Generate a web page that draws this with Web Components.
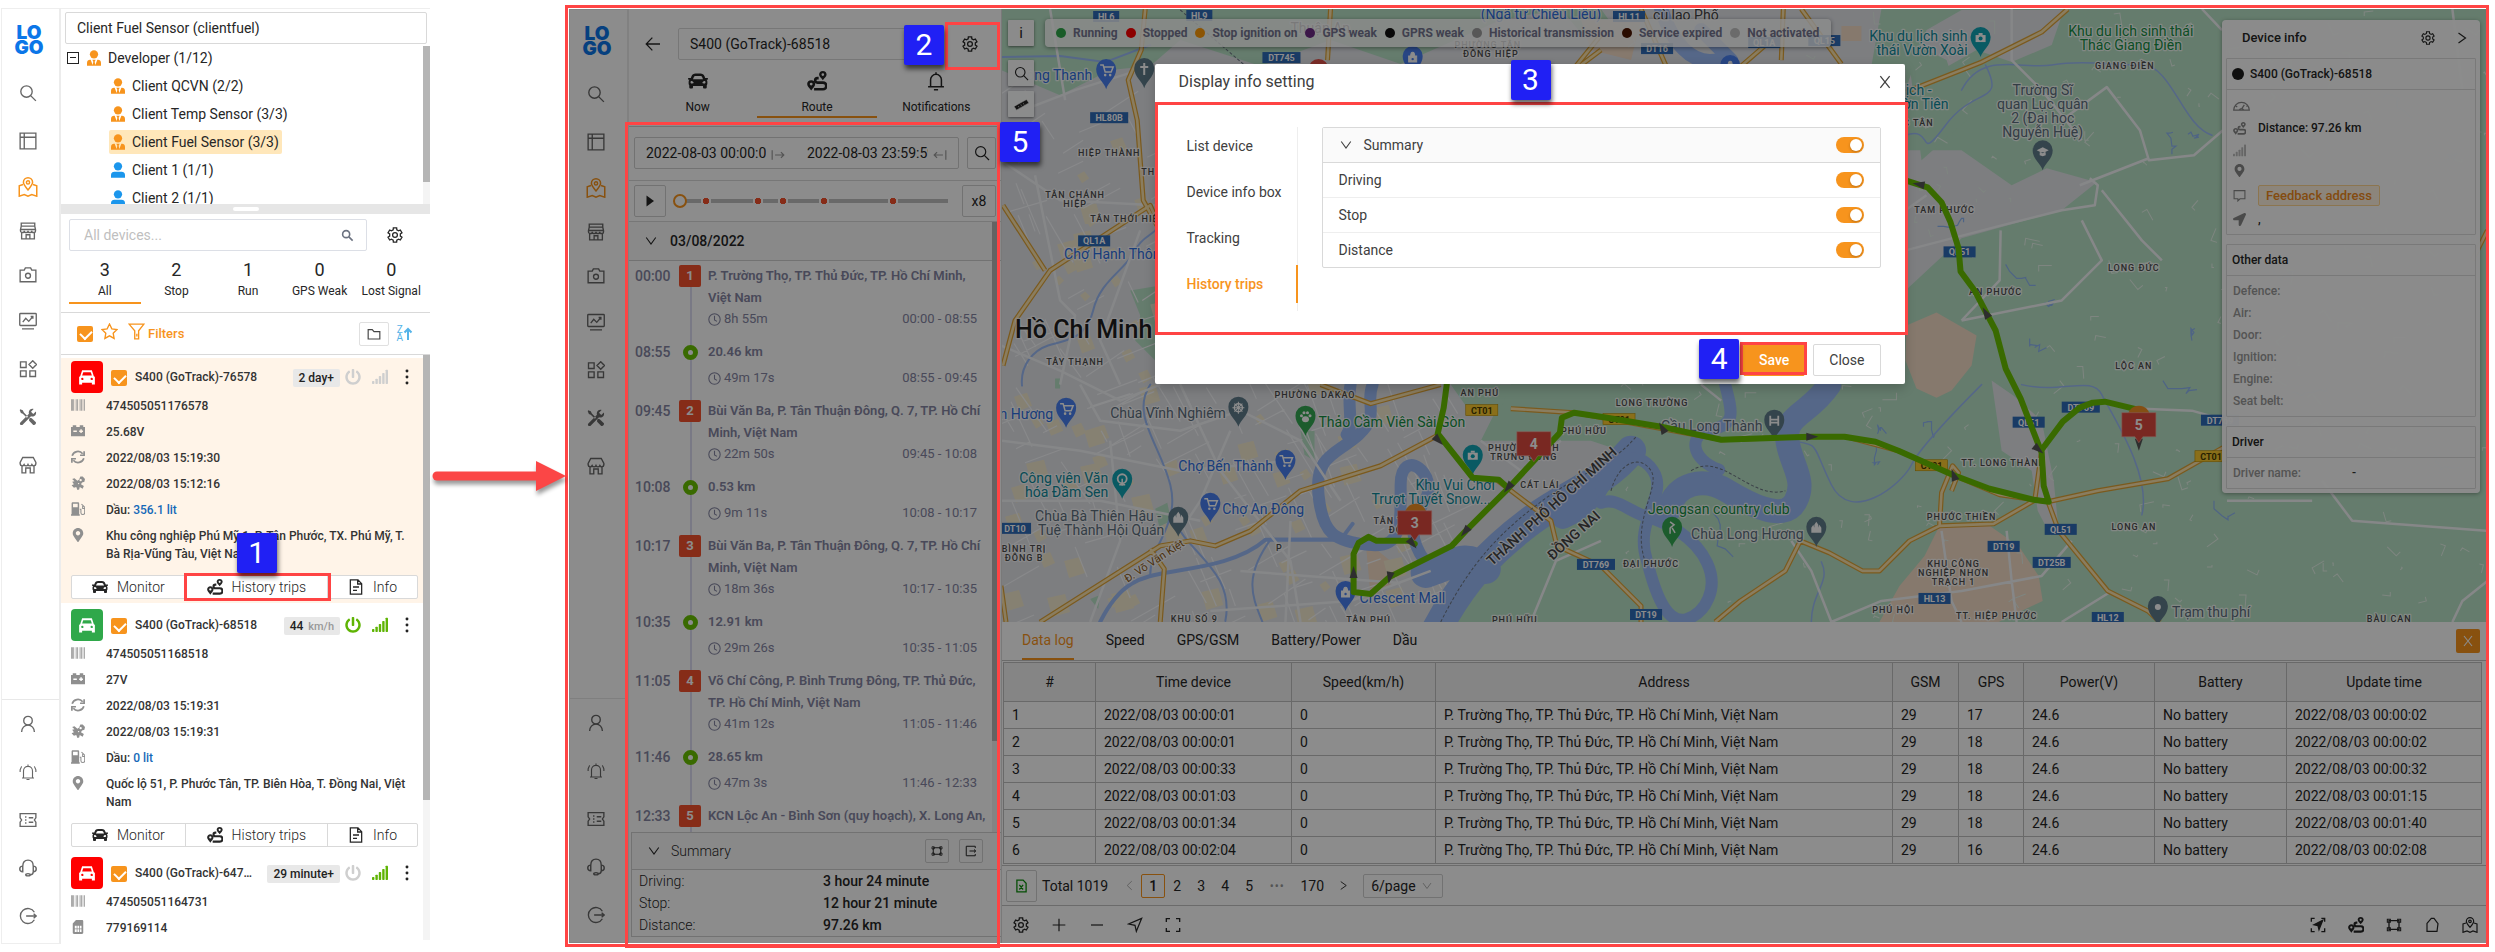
<!DOCTYPE html>
<html lang="en">
<head>
<meta charset="utf-8">
<title>Display info setting – History trips</title>
<style>
  html,body{margin:0;background:#fff}
  body{font-family:Roboto,"Liberation Sans",sans-serif;font-size:14px;line-height:20px;color:#262626}
</style>
</head>
<body>
<guide-page></guide-page>
<script>
const define = (name, css, html, ready) => {
  customElements.define(name, class extends HTMLElement {
    connectedCallback() {
      if (this.shadowRoot) return;
      const root = this.attachShadow({mode: 'open'});
      const t = document.createElement('template');
      t.innerHTML = `<style>*{box-sizing:border-box}
        button,input,select{font:inherit;color:inherit;margin:0}
        button{padding:0;border:0;background:none;cursor:pointer}
        ul,ol,dl,dd,h2,h3,p{margin:0;padding:0;list-style:none;font:inherit}
        a{color:inherit;text-decoration:none}
        ${css}</style>` + (typeof html === 'function' ? html(this) : html);
      root.append(t.content.cloneNode(true));
      if (ready) ready(root, this);
    }
  });
};

/* ---------- icons ---------- */
const gear = (() => {
  let p = '';
  for (let i = 0; i < 6; i++) {
    const a = i * 60 - 90;
    [[-19, 8.2], [-13, 11], [13, 11], [19, 8.2]].forEach(([d, r], k) => {
      const t = (a + d) * Math.PI / 180;
      p += (i + k ? 'L' : 'M') + (12 + r * Math.cos(t)).toFixed(1) + ' ' + (12 + r * Math.sin(t)).toFixed(1);
    });
  }
  return `<path d="${p}Z"/><circle cx="12" cy="12" r="3.6"/>`;
})();
const fill = (vb, d) => ({vb, f: 1, d: `<path d="${d}"/>`});
const ICONS = {
  gear: {sw: 1.9, d: gear},
  search: {sw: 1.8, d: '<circle cx="10" cy="10" r="7.6"/><path d="M15.5 15.5 22.5 22.5"/>'},
  find: {sw: 3, d: '<circle cx="9.5" cy="9.5" r="6.5"/><path d="M14.5 14.5 21.5 21.5"/>'},
  layout: {sw: 1.8, d: '<path d="M1.5 1.5h21v21h-21zM7 1.5v21M1.5 7H22.5"/>'},
  map: {sw: 1.8, d: '<path d="M12 15.500C8.500 11.500 6.500 9 6.500 6.400a5.500 5.500 0 0 1 11 0C17.500 9 15.500 11.500 12 15.500z"/><circle cx="12" cy="6.500" r="1.900"/><path d="M6 9 1.500 10.500V23l6-2 4.500 2 4.500-2 6 2V10.500L18 9"/>'},
  store: {sw: 1.8, d: '<path d="M3 1.500h18v4H3zM3 5.500 2 10h20l-1-4.500M2 10v1.500a2.500 2.500 0 0 0 5 0 2.500 2.500 0 0 0 5 0 2.500 2.500 0 0 0 5 0 2.500 2.500 0 0 0 5 0V10M3.500 14v8.500h17V14M9.500 22.500V17h5v5.500"/>'},
  camera: {sw: 1.8, d: '<path d="M1.500 5.500h5.500l1.500-3h7l1.500 3h5.500v15.500h-21z"/><circle cx="12" cy="13" r="3.300"/>'},
  monitor: {sw: 1.8, d: '<rect x="1" y="2" width="22" height="16" rx="1"/><path d="M5 13.500 9 8.500l4 4 5.500-6.500M15.500 6h3v3M4 22.500h16"/>'},
  apps: {sw: 1.8, d: '<path d="M2 2.500h7.500V10H2zM2 14.500h7.500V22H2zM14.500 14.500H22V22h-7.500zM18.300 1l5 5-5 5-5-5z"/>'},
  tools: {f: 1, d: '<path d="M1.500 1.500 5 3l1.500 3 5.500 5.500-1.500 1.500L5 7.500 2.500 6.500 1 3zM22.500 4.500l-3.500 3.500-3-3 3.500-3.700c-3-1-6.500 1-6.500 4.700 0 .8.100 1.300.300 1.800L1.500 19.500c-1 1.500.500 4 3 3L16 11c3.500 1.300 8-1.500 6.500-6.500z"/><path d="M14.500 13 17 13.500l5.500 5.500c1 1.500-1.500 4.500-3.500 3.500L13.500 17v-2.500z"/>'},
  shop: {sw: 1.8, d: '<path d="M5 2h14l3.500 6.500v2a2.800 2.800 0 0 1-5.300 1 2.800 2.800 0 0 1-5.200 0 2.800 2.800 0 0 1-5.200 0 2.800 2.800 0 0 1-5.300-1v-2zM4 13v9.500h5V16h6v6.500h5V13"/>'},
  user: {d: '<circle cx="12" cy="7.500" r="5.700"/><path d="M3.500 22.500c0-5 3.500-9 8.500-9s8.500 4 8.500 9"/>', sw: 1.8},
  alarm: {sw: 1.5, d: '<path d="M6 20V10.500a6 6 0 0 1 12 0V20M4 20h16M10 22h4M12 4.500V2M3.500 4.500 1.500 9v3M20.500 4.500l2 4.500v3"/>'},
  bell: {sw: 1.800, d: '<path d="M5.500 19V10.500a6.500 6.500 0 0 1 13 0V19M2.500 19h19M12 4V1.500M9.500 22.500h5"/>'},
  ticket: {sw: 1.8, d: '<path d="M1.500 3.500h21V9L20.500 12l2 3v5.500h-21V15l2-3-2-3zM9 7v2M9 11v2M9 15v2M13 9h6M13 15h6"/>'},
  headset: {sw: 1.900, d: '<path d="M5 9.500C5 4 8 1.500 12 1.500S19 4 19 9.500M5 9.500v7.500c-2.500 0-4-1.500-4-3.700s1.500-3.800 4-3.800zM19 9.500v7.500c2.500 0 4-1.500 4-3.700s-1.500-3.800-4-3.800zM19 17c0 3-2 4-4 4"/><ellipse cx="12" cy="21" rx="3" ry="1.500"/>'},
  logout: {sw: 1.8, d: '<path d="M20.500 7A10 10 0 1 0 20.500 17M9.500 12H23M19.500 9l3.500 3-3.500 3"/>'},
  star: {d: '<path d="m12 1.500 3.300 6.800 7.200 1-5.300 5.100 1.300 7.400L12 18.200l-6.500 3.600 1.300-7.400L1.500 9.300l7.200-1z"/>', sw: 1.9},
  funnel: {d: '<path d="M1.500 1.500h21L15 11v11.500H9.500V11zM12.500 15v4"/>', sw: 1.9},
  folder: {sw: 2, d: '<path d="M2 4.500h7l3 3.500h10v12.500H2z"/>'},
  caret: {sw: 2.2, d: '<path d="M2.500 5l9.500 13 9.500-13"/>'},
  right: {sw: 2, d: '<path d="M6 3.500l12 8.500-12 8.500"/>'},
  left: {sw: 2, d: '<path d="M17 2.500 7 12l10 9.500"/>'},
  close: {sw: 2.2, d: '<path d="M4 2 20 22M20 2 4 22"/>'},
  back: {sw: 1.900, d: '<path d="M22.500 12H2M11 2.500 1.800 12 11 21.500"/>'},
  car: fill('0 32 512 448', 'M499.990 176h-59.870l-16.640-41.600C406.380 91.630 365.570 64 319.500 64h-127c-46.060 0-86.880 27.630-103.990 70.400L71.870 176H12.010C4.200 176-1.530 183.340.370 190.910l6 24C7.700 220.250 12.500 224 18.010 224h20.070C24.650 235.730 16 252.780 16 272v48c0 16.120 6.160 30.670 16 41.930V416c0 17.670 14.330 32 32 32h32c17.670 0 32-14.330 32-32v-32h256v32c0 17.670 14.330 32 32 32h32c17.670 0 32-14.330 32-32v-54.070c9.840-11.250 16-25.800 16-41.930v-48c0-19.220-8.650-36.270-22.070-48H494c5.510 0 10.310-3.750 11.640-9.090l6-24c1.890-7.570-3.840-14.910-11.650-14.910zm-352.060-17.830c7.290-18.220 24.940-30.170 44.570-30.170h127c19.630 0 37.280 11.950 44.570 30.170L384 208H128l19.930-49.830zM96 319.800c-19.200 0-32-12.760-32-31.900S76.800 256 96 256s48 28.710 48 47.850-28.800 15.950-48 15.950zm320 0c-19.200 0-48 3.190-48-15.950S396.800 256 416 256s32 12.760 32 31.900-12.800 31.900-32 31.900z'),
  carbox: {f: 1, d: '<path fill-rule="evenodd" d="M5.500 3h13l2.500 7.500 1.500 1.500v10h-4v-2.500h-13V22h-4V12L3 10.500zM7 5.500 5.500 10h13L17 5.500zM5.700 13a1.500 1.500 0 1 0 .1 3.100 1.500 1.500 0 0 0-.1-3.100zm12.500 0a1.500 1.500 0 1 0 .1 3.100 1.500 1.500 0 0 0-.1-3.100z"/>'},
  power: fill('0 0 512 512', 'M400 54.100c63 45 104 118.600 104 201.900 0 136.800-110.800 247.700-247.500 248C120 504.300 8.200 393 8 256.400 7.900 173.100 48.900 99.300 111.800 54.200c11.700-8.300 28-4.800 35 7.700L162.600 90c5.900 10.500 3.100 23.800-6.600 31-41.500 30.800-68 79.600-68 134.900-.1 92.300 74.500 168.100 168 168.100 91.600 0 168.600-74.200 168-169.100-.3-51.800-24.700-101.800-68.100-134-9.700-7.200-12.400-20.500-6.500-30.900l15.800-28.100c7-12.400 23.200-16.100 34.800-7.800zM296 264V24c0-13.300-10.700-24-24-24h-32c-13.300 0-24 10.700-24 24v240c0 13.300 10.700 24 24 24h32c13.300 0 24-10.700 24-24z'),
  signal: {f: 1, d: '<rect y="18" width="3.600" height="4.500" rx="1"/><rect x="5.100" y="14.500" width="3.600" height="8" rx="1"/><rect x="10.200" y="10.500" width="3.600" height="12" rx="1"/><rect x="15.300" y="6" width="3.600" height="16.500" rx="1"/><rect x="20.400" y="1" width="3.600" height="21.500" rx="1"/>'},
  dots: {f: 1, d: '<circle cx="12" cy="3" r="2.200"/><circle cx="12" cy="12" r="2.200"/><circle cx="12" cy="21" r="2.200"/>'},
  barcode: {f: 1, d: '<path d="M0 2h5v20H0zM6.500 2h1v20h-1zM9 2h3v20H9zM13.500 2h1v20h-1zM16 2h3v20h-3zM20 2h1v20h-1zM22 2h2v20h-2z" opacity=".75"/>'},
  battery: {f: 1, d: '<path fill-rule="evenodd" d="M3 2h6v3h6V2h6v3h3v16H0V5h3zM4 11v2.500h6V11zM16 9v2h-2v2.500h2v2h2.500v-2h2V11h-2V9z"/>'},
  sync: {sw: 2.900, d: '<path d="M22.500 2v7h-7M1.500 22v-7h7M2 10a10.300 10.300 0 0 1 18-3.500M22 14a10.300 10.300 0 0 1-18 3.500"/>'},
  sat: {f: 1, d: '<path d="m2 5 4-1 5 4 3-2 2-5 4 0 4 4-1 5-4 1-2 3 5 3-2 5-5-3-1 4-3 1-2-5-4 1-4-4 4-2-3-4 4-1z"/><circle cx="16.500" cy="7" r="2" fill="var(--hole,#fff)"/><circle cx="13" cy="13" r="1.200" fill="var(--hole,#fff)"/>'},
  fuel: {f: 1, d: '<path fill-rule="evenodd" d="M1 2.500C1 1.500 2 .500 3 .500h9c1 0 2 1 2 2V21h1v2.500H0V21h1zM3.500 3v6h8V3z"/><path d="M15 12.500h2v6c0 4 6.500 4 6.500 0V9L18 3.500M20 7v4h3.500" fill="none" stroke="currentColor" stroke-width="1.800"/>'},
  pin: fill('0 0 384 512', 'M172.268 501.670C26.970 291.031 0 269.413 0 192 0 85.961 85.961 0 192 0s192 85.961 192 192c0 77.413-26.970 99.031-172.268 309.670-9.535 13.774-29.930 13.773-39.464 0zM192 272c44.183 0 80-35.817 80-80s-35.817-80-80-80-80 35.817-80 80 35.817 80 80 80z'),
  sim: {f: 1, d: '<path fill-rule="evenodd" d="M8.500 0H19c1 0 2 1 2 2v20c0 1-1 2-2 2H5c-1 0-2-1-2-2V6zM6.500 10v4.500h3.300V10zM11 10v4.500h3V10zm4.300 0v4.500H18V10zM6.500 16v4.500h3.300V16zM11 16v4.500h3V16zm4.300 0v4.500H18V16z"/>'},
  route: {f: 1, d: '<path fill-rule="evenodd" d="M5 11c2.800 0 4.800 2 4.800 4.700C9.800 18.500 7 20.500 5 23.500 3 20.500.200 18.500.200 15.700.200 13 2.200 11 5 11zm0 3a1.700 1.700 0 1 0 0 3.400A1.700 1.700 0 0 0 5 14zM19 0c2.800 0 4.500 2 4.500 4.300 0 2.400-2.500 4-4.500 6.700-2-2.700-4.500-4.300-4.500-6.700C14.500 2 16.200 0 19 0zm0 2.700a1.600 1.600 0 1 0 0 3.200 1.600 1.600 0 0 0 0-3.200z"/><path d="M14 8.500h-1.500a2.700 2.700 0 0 0 0 5.400h6.700a4 4 0 0 1 0 8H8.500" fill="none" stroke="currentColor" stroke-width="3.200"/>'},
  doc: {sw: 1.900, d: '<path d="M3.500 1.200H15L20.500 7v15.800h-17zM14.500 1.500v6H20M7.500 12h9M7.500 17h6"/>'},
  clock: {sw: 2, d: '<circle cx="12" cy="12" r="10.500"/><path d="M12 5v8l4.500 2.500"/>'},
  play: {f: 1, d: '<path d="M5 1 20 12 5 23z"/>'},
  to: {sw: 2, d: '<path d="M2 4v16M7 12h15M17 7l5 5-5 5"/>'},
  from: {sw: 2, d: '<path d="M22 4v16M17 12H2M7 7l-5 5 5 5"/>'},
  frame: {sw: 2, d: '<path d="M4.500 5.500h15v13h-15z"/><path d="M2 3.500h4.500v4.500H2zM17.500 3.500H22V8h-4.500zM2 16h4.500v4.500H2zM17.500 16H22v4.500h-4.500z" stroke-width="1.600"/>'},
  exit: {sw: 2, d: '<path d="M20.500 6V2.500h-18v19h18V18M9 12h12M18 9l3.500 3-3.500 3"/>'},
  ruler: {f: 1, d: '<path d="M0 15 20 4l4 5.500L4 21zM7 14.500l1 2M11 12l1 2M15 10l1 2" stroke="var(--hole,#fff)" stroke-width="1"/>'},
  plus: {d: '<path d="M12 2.500v19M2.500 12h19"/>', sw: 1.8},
  minus: {d: '<path d="M3 12h18"/>', sw: 1.8},
  nav: {d: '<path d="M22 2 2.500 10.500 12 12.500l2 9z"/>', sw: 1.8},
  full: {d: '<path d="M2 7.500V2.500h5.500M16.500 2.500H22v5M22 16.500v5h-5.500M7.500 21.500H2v-5"/>', sw: 2},
  locate: {sw: 2, d: '<path d="M2 7V2h5M17 2h5v5M22 17v5h-5M7 22H2v-5"/><path d="M19 5 6 11.500l6 1.500 1.500 6z" fill="currentColor"/>'},
  poly: {d: '<path d="M4.500 9.500 11 2h4l6 8-1.500 11.500H4.500z"/>', sw: 1.8},
  gauge: {d: '<path d="M1 18.500a11 11 0 0 1 22 0zM12 17l4-6M9 18a3.500 3.500 0 0 1 6 0M3 12l3 2M21 12l-2 1.500"/>', sw: 1.8},
  chat: {d: '<path d="M2 3h20v15h-9l-4 4v-4H2z"/>', sw: 2},
  arrow: fill('0 0 512 512', 'M444.520 3.520 28.740 195.420c-47.970 22.390-31.980 92.750 19.190 92.750h175.910v175.910c0 51.170 70.360 67.170 92.750 19.190l191.900-415.780c15.990-38.390-25.590-79.970-63.970-63.970z'),
  sheet: {sw: 2.4, d: '<path d="M3.500 1.200H15L20.500 7v15.800h-17zM8 10l7 8.500M15 10l-7 8.500"/>'},
  person: {f: 1, d: '<circle cx="12" cy="6.500" r="6.200"/><path d="M1.500 23.500v-4c0-3.500 2.500-5 5-5h11c2.500 0 5 1.500 5 5v4z"/>'},
  tie: {f: 1, d: '<circle cx="12" cy="6.500" r="6.200"/><path d="M1.500 23.500v-4c0-3.500 2-5 4.500-5h1L10 22.500l1-5-1.500-3h5l-1.500 3 1 5 3-8h1c2.500 0 4.500 1.500 4.500 5v4z"/>'}
};
define('ui-icon', `:host{display:inline-block;width:16px;height:16px;flex:none;line-height:0}
  svg{width:100%;height:100%;display:block}`, el => {
  const i = ICONS[el.getAttribute('name')];
  const paint = i.f ? 'fill="currentColor"' : `fill="none" stroke="currentColor" stroke-width="${i.sw || 1.6}"`;
  return `<svg viewBox="${i.vb || '0 0 24 24'}" ${paint} aria-hidden="true">${i.d}</svg>`;
});

/* ---------- annotations ---------- */
define('note-box', ':host{position:absolute;display:block;border:3px solid #ff4444;z-index:5;pointer-events:none}', '');
define('note-num', `:host{position:absolute;display:block;width:40px;height:40px;z-index:6;border-radius:2px;background:#2020f4;color:#fff;
  font-size:30px;line-height:40px;text-align:center;font-weight:400;box-shadow:1px 4px 5px rgba(0,0,0,.6)}`, '<slot></slot>');
define('flow-arrow', `:host{display:flex;align-items:center}
  svg{width:100%;height:44px;overflow:visible;display:block;filter:drop-shadow(1px 4px 2px rgba(0,0,0,.4))}`,
  `<svg viewBox="0 0 135 44" preserveAspectRatio="none"><path d="M7 22h104" stroke="#fb4646" stroke-width="9" stroke-linecap="round"/><path d="M106 7 136 22 106 37z" fill="#fb4646"/></svg>`);

/* ---------- navigation rail ---------- */
define('app-rail', `:host{display:flex;flex-direction:column;width:60px;border:1px solid #eee;border-right:2px solid #ececec;color:#666;background:#fff}
  .logo{font:900 19px/15px Inter,"Open Sans",sans-serif;color:#0b76e8;margin:16px 0 14px 12px;width:30px;text-align:center}
  .g44 a{height:44px}.g48 a,.foot a{height:48px}
  nav a{display:flex;align-items:center;padding-left:17px}
  ui-icon{width:18px;height:18px}
  .on{color:#f7941d}.on ui-icon{width:20px;height:20px;margin-left:-1px}
  .foot{margin-top:auto;border-top:1px solid #e8e8e8;padding-bottom:3px}`,
  () => {
    const l = (n, t, c = '') => `<a href="#${n}" class="${c}" aria-label="${t}"><ui-icon name="${n}"></ui-icon></a>`;
    return `<div class="logo">LO<br>GO</div>
    <nav class="g48">${l('search', 'Search')}${l('layout', 'Dashboard')}</nav>
    <nav class="g44">${l('map', 'Map', 'on')}${l('store', 'Points')}${l('camera', 'Camera')}</nav>
    <nav class="g48">${l('monitor', 'Report')}${l('apps', 'Apps')}${l('tools', 'Tools')}${l('shop', 'Shop')}</nav>
    <nav class="foot">${l('user', 'Account')}${l('alarm', 'Alerts')}${l('ticket', 'Tickets')}${l('headset', 'Support')}${l('logout', 'Log out')}</nav>`;
  });

/* ---------- device list ---------- */
define('client-tree', `:host{display:block;position:relative;height:160px;overflow:hidden;flex:none}
  li{height:28px;display:flex;align-items:center}
  .root{padding-left:6px}.root ui-icon{margin:0 6px 0 7px}
  .box{width:12px;height:12px;border:1px solid #222;position:relative}
  .box:after{content:"";position:absolute;left:2px;right:2px;top:4px;height:1px;background:#222}
  .kid{padding-left:48px}
  .kid a{display:flex;align-items:center;height:24px;padding:0 3px 0 1px;border-radius:2px;white-space:nowrap}
  .kid ui-icon{margin-right:6px}
  .sel a{background:#ffe7ba}
  ui-icon{color:#f7941d}.blue{color:#1b96ec}
  .bar{position:absolute;right:0;top:2px;bottom:0;width:7px;background:#f4f4f4}
  .bar i{display:block;height:136px;background:#b5b5b5}`,
  `<ul><li class="root"><button class="box" aria-label="Collapse"></button><ui-icon name="tie"></ui-icon>Developer (1/12)</li>
  <li class="kid"><a href="#c1"><ui-icon name="tie"></ui-icon>Client QCVN (2/2)</a></li>
  <li class="kid"><a href="#c2"><ui-icon name="tie"></ui-icon>Client Temp Sensor (3/3)</a></li>
  <li class="kid sel"><a href="#c3"><ui-icon name="tie"></ui-icon>Client Fuel Sensor (3/3)</a></li>
  <li class="kid"><a href="#c4"><ui-icon class="blue" name="person"></ui-icon>Client 1 (1/1)</a></li>
  <li class="kid"><a href="#c5"><ui-icon class="blue" name="person"></ui-icon>Client 2 (1/1)</a></li></ul>
  <div class="bar"><i></i></div>`);

const TICK = `input[type=checkbox].tick{appearance:none;width:16px;height:16px;background:#f7941d;border-radius:2px;position:relative;flex:none}
  .tick:after{content:"";position:absolute;left:5px;top:2px;width:6px;height:9px;border:solid #fff;border-width:0 2px 2px 0;transform:rotate(45deg)}`;

define('device-row', `:host{display:flex;align-items:flex-start;min-height:26px;padding:4px 0;line-height:18px}
  ui-icon{width:14px;height:14px;margin:1px 21px 0 0;color:#8f8f8f}`,
  el => `<ui-icon name="${el.getAttribute('icon')}"></ui-icon><span><slot></slot></span>`);

define('device-card', `:host{display:block;padding:3px 5px 4px 10px;margin-bottom:3px;font-size:12px;font-weight:500;color:#333}
  :host([active]){background:#fff4e8;--hole:#fff4e8}
  .head{display:flex;align-items:center;height:32px}
  .pic{width:32px;height:32px;border-radius:4px;display:grid;place-items:center;color:#fff;background:var(--c,red)}
  .pic ui-icon{width:20px;height:18px}
  ${TICK} input[type=checkbox].tick{margin:2px 8px 0 8px}
  .name{flex:1;min-width:0;overflow:hidden;text-overflow:ellipsis;white-space:nowrap;line-height:20px}
  .tag{background:#e8e8e8;border-radius:2px;padding:0 6px;line-height:18px;height:18px;margin:2px 5px 0 12px;color:#222;white-space:nowrap}
  .tag small{font-size:11px;color:#999;margin-left:5px}
  .pw,.sg{color:#cfcfcf;margin-right:10px}.sg{width:18px}
  .pw[on],.sg[on]{color:#5fb404}
  .more{color:#222;width:14px;display:grid;place-items:center;margin-right:5px}
  .acts{display:flex;border:1px solid #d9d9d9;border-radius:2px;background:#fff;height:24px;margin:8px 0 0 0;font-weight:300;font-size:14px;width:100%}
  .acts button{display:flex;align-items:center;justify-content:center;gap:9px;line-height:22px;color:#262626;position:relative}
  .acts button+button{border-left:1px solid #d9d9d9}
  .acts .m{flex:114}.acts .h{flex:143}.acts .i{flex:90}
  ::slotted(note-box){inset:-3px -4px -3px -2px}
  ::slotted(note-num){left:51px;top:-43px}`,
  el => {
    const a = n => el.getAttribute(n);
    return `<div class="head"><span class="pic" style="--c:${a('color')}"><ui-icon name="carbox"></ui-icon></span>
    <input type="checkbox" class="tick" checked aria-label="${a('name')}">
    <span class="name">${a('name')}</span>
    <span class="tag">${a('tag')}${a('unit') ? `<small>${a('unit')}</small>` : ''}</span>
    <ui-icon class="pw" name="power" ${el.hasAttribute('power') ? 'on' : ''}></ui-icon>
    <ui-icon class="sg" name="signal" ${el.hasAttribute('signal') ? 'on' : ''}></ui-icon>
    <button class="more" aria-label="More"><ui-icon name="dots"></ui-icon></button></div>
    <slot></slot>
    ${el.hasAttribute('short') ? '' : `<div class="acts">
      <button class="m"><ui-icon name="car"></ui-icon>Monitor</button>
      <button class="h"><ui-icon name="route"></ui-icon>History trips<slot name="note"></slot></button>
      <button class="i"><ui-icon name="doc"></ui-icon>Info</button></div>`}`;
  });

define('device-panel', `:host{display:flex;flex-direction:column;min-width:0;border-top:1px solid #eee;background:#fff}
  .cust{display:block;height:32px;margin:3px 3px 0 4px;border:1px solid #d9d9d9;border-radius:2px;padding:0 11px;outline:0;background:#fff;flex:none}
  .split{height:10px;background:#e6e6e6;display:grid;place-items:center;flex:none}
  .split i{width:26px;height:4px;border-radius:2px;background:#fff}
  .find{display:flex;align-items:center;padding:5px 27px 5px 8px;gap:20px;height:42px;flex:none}
  .find label{flex:1;display:flex;align-items:center;height:32px;border:1px solid #dcdfe6;border-radius:2px;padding:0 12px 0 14px;color:#6b7280}
  .find input{flex:1;min-width:0;border:0;outline:0;background:none;padding:0}
  .find input::placeholder{color:#bfbfbf}
  .find label ui-icon{width:13px;height:13px}
  .find button ui-icon{display:block}
  .stats{display:grid;grid-template-columns:repeat(5,1fr);padding:2px 3px 8px 8px;border-bottom:1px solid #d9d9d9;flex:none}
  .stats button{display:block;text-align:center;font-size:12px;line-height:20px;padding-bottom:1px;height:46px;border-bottom:2px solid transparent;white-space:nowrap}
  .stats b{display:block;font-size:18px;line-height:22px;font-weight:400}
  .stats .on{border-color:#f7941d}
  .filt{display:flex;align-items:center;height:42px;padding:0 17px 0 16px;border-bottom:1px solid #d9d9d9;color:#f7941d;font-size:13px;font-weight:500;flex:none}
  ${TICK}
  .filt ui-icon{width:17px;height:17px}
  .star{margin:0 10px 4px 8px}.fun{margin:0 3px 4px 0}
  .fold{margin-left:auto;width:30px;height:24px;border:1px solid #e0e0e0;border-radius:2px;display:grid;place-items:center;color:#444}
  .filt .fold ui-icon{width:14px;height:14px}
  .za{margin-left:7px;color:#55b3e8;display:flex;align-items:center;font-weight:400;font-size:10px;line-height:8px}
  .list{flex:1;min-height:0;position:relative;overflow:hidden;padding:3px 7px 0 0;margin-bottom:4px}
  .bar{position:absolute;right:0;top:0;bottom:0;width:7px;background:#f4f4f4}
  .bar i{display:block;height:76%;background:#b5b5b5}
  a{color:#1568b8}`,
  `<input class="cust" aria-label="Customer" value="Client Fuel Sensor (clientfuel)">
  <client-tree></client-tree><div class="split"><i></i></div>
  <div class="find"><label><input aria-label="All devices" placeholder="All devices..."><ui-icon name="find"></ui-icon></label>
  <button aria-label="Settings"><ui-icon name="gear"></ui-icon></button></div>
  <div class="stats"><button class="on"><b>3</b>All</button><button><b>2</b>Stop</button><button><b>1</b>Run</button><button><b>0</b>GPS Weak</button><button><b>0</b>Lost Signal</button></div>
  <div class="filt"><input type="checkbox" class="tick" checked aria-label="Select all"><ui-icon class="star" name="star"></ui-icon><ui-icon class="fun" name="funnel"></ui-icon>Filters
  <button class="fold" aria-label="Groups"><ui-icon name="folder"></ui-icon></button><button class="za" aria-label="Sort"><span>Z<br>A</span><svg width="10" height="14" viewBox="0 0 10 14" fill="none" stroke="currentColor" stroke-width="2"><path d="M5 13V2M1.500 5.500 5 2l3.500 3.500"/></svg></button></div>
  <div class="list">
   <device-card active name="S400 (GoTrack)-76578" tag="2 day+" color="#ff0000">
    <device-row icon="barcode">474505051176578</device-row><device-row icon="battery">25.68V</device-row>
    <device-row icon="sync">2022/08/03 15:19:30</device-row><device-row icon="sat">2022/08/03 15:12:16</device-row>
    <device-row icon="fuel">Dầu: <a href="#f1">356.1 lit</a></device-row>
    <device-row icon="pin">Khu công nghiệp Phú Mỹ 1, P. Tân Phước, TX. Phú Mỹ, T. Bà Rịa-Vũng Tàu, Việt Nam</device-row>
    <note-box slot="note"></note-box><note-num slot="note">1</note-num>
   </device-card>
   <device-card name="S400 (GoTrack)-68518" tag="44" unit="km/h" power signal color="#2fa84a">
    <device-row icon="barcode">474505051168518</device-row><device-row icon="battery">27V</device-row>
    <device-row icon="sync">2022/08/03 15:19:31</device-row><device-row icon="sat">2022/08/03 15:19:31</device-row>
    <device-row icon="fuel">Dầu: <a href="#f2">0 lit</a></device-row>
    <device-row icon="pin">Quốc lộ 51, P. Phước Tân, TP. Biên Hòa, T. Đồng Nai, Việt Nam</device-row>
   </device-card>
   <device-card short name="S400 (GoTrack)-64731" tag="29 minute+" signal color="#ff0000">
    <device-row icon="barcode">474505051164731</device-row><device-row icon="sim">779169114</device-row>
   </device-card>
   <div class="bar"><i></i></div>
  </div>`);

/* ---------- trips ---------- */
define('trip-item', `:host{display:grid;grid-template-columns:44px 23px 290px;color:#8586a3;font-size:13px;line-height:22px;padding-left:6px}
  time{font-size:14px;font-weight:500}
  .mk{position:relative;text-align:center}
  .mk:before{content:"";position:absolute;left:11px;top:0;bottom:0;width:2px;background:#dcdcf2}
  .mk b{position:relative;display:block;width:22px;height:22px;border-radius:2px;background:#f5502d;color:#fff;font-weight:700}
  .mk i{position:relative;display:block;box-sizing:border-box;width:15px;height:15px;border:5px solid #69c200;border-radius:50%;margin:4px auto 0;background:#fff}
  .tx{padding-left:6px;padding-bottom:12px}
  .tx p{font-weight:600}
  .ck{display:flex;align-items:center;line-height:20px;gap:3px;padding-right:15px}
  .ck span{margin-left:auto}
  ui-icon{width:13px;height:13px}
  :host([km]) .ck{margin-top:5px}`,
  el => {
    const a = n => el.getAttribute(n);
    return `<time>${a('at')}</time><div class="mk">${a('no') ? `<b>${a('no')}</b>` : '<i></i>'}</div>
    <div class="tx"><p><slot></slot></p>${a('dur') ? `<div class="ck"><ui-icon name="clock"></ui-icon>${a('dur')}<span>${a('range')}</span></div>` : ''}</div>`;
  });

define('trips-panel', `:host{display:flex;flex-direction:column;position:relative;background:#fff;min-width:0;min-height:0;border-right:1px solid #ddd}
  .top{display:flex;align-items:center;padding:19px 0 0 16px}
  .top ui-icon{display:block}
  .top input{flex:1;min-width:0;height:32px;margin-left:17px;border:1px solid #d9d9d9;border-radius:2px;padding:0 11px;background:none}
  .cog{position:relative;width:57px;height:32px;display:flex;align-items:center;padding-left:18px}
  .cog note-box{left:1px;right:1px;top:-6px;bottom:-10px}
  .cog note-num{left:-40px;top:-3px}
  .tabs{display:grid;grid-template-columns:repeat(3,1fr);padding:10px 5px 8px 9px;border-bottom:1px solid #d0d0d0}
  .tabs button{display:flex;flex-direction:column;align-items:center;gap:6px;height:48px;font-size:12px;line-height:18px;border-bottom:2px solid transparent}
  .tabs ui-icon{width:20px;height:22px}
  .tabs .on{border-color:#f7941d}
  .dates{display:flex;gap:8px;padding:10px 5px 11px;border-bottom:1px solid #d9d9d9}
  .rng{flex:1;display:flex;border:1px solid #d0d0d0;border-radius:2px;height:32px;padding:0 11px;align-items:center}
  .rng input{width:120px;border:0;background:none;padding:0;outline:0}
  .rng ui-icon{color:#999;width:14px;height:14px;margin:3px 22px 0 5px}
  .rng ui-icon:last-child{margin-right:0}.rng input+ui-icon+input{width:121px}
  .sq{border:1px solid #d0d0d0;border-radius:2px;height:32px;display:grid;place-items:center}
  .play{display:flex;align-items:center;padding:4px 5px;border-bottom:1px solid #d9d9d9}
  .play .p{width:32px}.play .p ui-icon{width:12px;height:12px}
  .play .x{width:34px;margin-left:14px}
  .sl{position:relative;flex:1;margin-left:7px;height:14px}
  .sl input{appearance:none;display:block;width:100%;height:14px;background:linear-gradient(#bfbfbf,#bfbfbf) 7px 5px/calc(100% - 7px) 4px no-repeat}
  .sl input::-webkit-slider-thumb{appearance:none;width:14px;height:14px;border-radius:50%;border:2px solid #f7941d;background:#fff}
  .sl i{position:absolute;top:4px;width:10px;height:6px;margin-left:-5px;background:radial-gradient(circle,#f5502d 3px,#fff 3px)}
  .day{display:flex;align-items:center;gap:13px;height:38px;padding-left:16px;font-weight:500;background:#fafafa;flex:none}
  .day ui-icon{width:12px;height:12px}
  .list{flex:1;min-height:0;position:relative;overflow:hidden;border-top:1px solid #d0d0d0;padding-top:4px}
  .sc{flex:1;min-height:0;display:flex;flex-direction:column;position:relative}
  .bar{position:absolute;right:4px;top:0;bottom:0;width:5px;background:#eee}
  .bar i{display:block;height:85%;background:#b5b5b5}
  .sum{border:1px solid #d0d0d0;border-width:1px 0 1px 1px;margin:0 0 6px 2px;font-weight:300;flex:none}
  .sum h3{display:flex;align-items:center;height:37px;padding:0 18px 0 16px;border-bottom:1px solid #d0d0d0;gap:10px;background:#fafafa}
  .sum h3 ui-icon{width:12px;height:12px}.sum h3 span{flex:1;margin-left:1px}
  .sum h3 button{width:24px;height:24px;border:1px solid #d0d0d0;border-radius:2px;display:grid;place-items:center}
  dl{display:grid;grid-template-columns:184px 1fr;padding:0 0 0 7px;line-height:22px}
  dd{font-weight:500}
  .five{left:-4px;right:1px;top:113px;bottom:-5px}
  .n5{left:371px;top:113px}`,
  `<div class="top"><button aria-label="Back"><ui-icon name="back"></ui-icon></button><input aria-label="Device" value="S400 (GoTrack)-68518">
   <div class="cog"><button aria-label="Display settings"><ui-icon name="gear"></ui-icon></button><note-box></note-box><note-num>2</note-num></div></div>
  <div class="tabs"><button><ui-icon name="car"></ui-icon>Now</button><button class="on"><ui-icon name="route"></ui-icon>Route</button><button><ui-icon name="bell"></ui-icon>Notifications</button></div>
  <div class="dates"><div class="rng"><input aria-label="From" value="2022-08-03 00:00:00"><ui-icon name="to"></ui-icon><input aria-label="To" value="2022-08-03 23:59:59"><ui-icon name="from"></ui-icon></div>
   <button class="sq" style="width:29px" aria-label="Search"><ui-icon name="search"></ui-icon></button></div>
  <div class="play"><button class="sq p" aria-label="Play"><ui-icon name="play"></ui-icon></button>
   <div class="sl"><input type="range" min="0" max="100" value="0" aria-label="Playback position"><i style="left:12%"></i><i style="left:31%"></i><i style="left:40%"></i><i style="left:55%"></i><i style="left:80%"></i></div>
   <button class="sq x">x8</button></div>
  <div class="sc"><div class="day"><ui-icon name="caret"></ui-icon>03/08/2022</div>
  <div class="list">
   <trip-item at="00:00" no="1" dur="8h 55m" range="00:00 - 08:55">P. Trường Thọ, TP. Thủ Đức, TP. Hồ Chí Minh, Việt Nam</trip-item>
   <trip-item km at="08:55" dur="49m 17s" range="08:55 - 09:45">20.46 km</trip-item>
   <trip-item at="09:45" no="2" dur="22m 50s" range="09:45 - 10:08">Bùi Văn Ba, P. Tân Thuận Đông, Q. 7, TP. Hồ Chí Minh, Việt Nam</trip-item>
   <trip-item km at="10:08" dur="9m 11s" range="10:08 - 10:17">0.53 km</trip-item>
   <trip-item at="10:17" no="3" dur="18m 36s" range="10:17 - 10:35">Bùi Văn Ba, P. Tân Thuận Đông, Q. 7, TP. Hồ Chí Minh, Việt Nam</trip-item>
   <trip-item km at="10:35" dur="29m 26s" range="10:35 - 11:05">12.91 km</trip-item>
   <trip-item at="11:05" no="4" dur="41m 12s" range="11:05 - 11:46">Võ Chí Công, P. Bình Trưng Đông, TP. Thủ Đức, TP. Hồ Chí Minh, Việt Nam</trip-item>
   <trip-item km at="11:46" dur="47m 3s" range="11:46 - 12:33">28.65 km</trip-item>
   <trip-item at="12:33" no="5">KCN Lộc An - Bình Sơn (quy hoạch), X. Long An,</trip-item>
  </div><div class="bar"><i></i></div></div>
  <div class="sum"><h3><ui-icon name="caret"></ui-icon><span>Summary</span><button aria-label="Area"><ui-icon name="frame"></ui-icon></button><button aria-label="Export"><ui-icon name="exit"></ui-icon></button></h3>
   <dl><dt>Driving:</dt><dd>3 hour 24 minute</dd><dt>Stop:</dt><dd>12 hour 21 minute</dd><dt>Distance:</dt><dd>97.26 km</dd></dl></div>
  <note-box class="five"></note-box><note-num class="n5">5</note-num>`);

/* ---------- map ---------- */
const mapArt = () => {
  let seed = 7;
  const rnd = () => (seed = (seed * 16807) % 2147483647) / 2147483647;
  let city = '', rural = '', blocks = '', creeks = '';
  for (let i = 0; i < 260; i++) {
    const x = 1001 + rnd() * 460, y = 90 + rnd() * 540, a = (rnd() < .5 ? -.6 : .95) + rnd() * .3, l = 12 + rnd() * 45;
    city += `M${x | 0} ${y | 0}l${(l * Math.cos(a)) | 0} ${(l * Math.sin(a)) | 0}`;
  }
  for (let i = 0; i < 110; i++) {
    const x = 1001 + rnd() * 400, y = 120 + rnd() * 490, w = 5 + rnd() * 14;
    blocks += `M${x | 0} ${y | 0}l${w | 0} -4l5 ${w | 0}l-${w | 0} 5z`;
  }
  for (let i = 0; i < 240; i++) {
    const x = 1620 + rnd() * 870, y = 10 + rnd() * 610, l = 3 + rnd() * 12, a = rnd() * 6;
    rural += `M${x | 0} ${y | 0}l${(l * Math.cos(a)) | 0} ${(l * Math.sin(a)) | 0}l${(l / 2 * Math.sin(a)) | 0} ${(-l / 2 * Math.cos(a)) | 0}`;
  }
  for (let i = 0; i < 26; i++) {
    let x = 1640 + rnd() * 820, y = 40 + rnd() * 540;
    creeks += `M${x | 0} ${y | 0}`;
    for (let k = 0; k < 7; k++) creeks += `l${(rnd() * 14 - 5) | 0} ${(rnd() * 14 - 5) | 0}`;
  }
  const caps = (x, y, s, a = 'middle') => `<text class="caps" x="${x}" y="${y + 4}" text-anchor="${a}">${s}</text>`;
  const poi = (x, y, s, c, a = 'start') => `<text class="poi ${c}" x="${x}" y="${y + 5}" text-anchor="${a}">${s}</text>`;
  const tag = (x, y, s, c = '') => `<g class="tag ${c}"><rect x="${x - s.length * 3 - 4}" y="${y - 5}" width="${s.length * 6 + 8}" height="11"/><text x="${x}" y="${y + 4}" text-anchor="middle">${s}</text></g>`;
  const G = {
    cart: '<path d="M-6-5h3l2 7h6l2-5h-9" fill="none" stroke="#fff" stroke-width="1.500"/><circle cx="-1" cy="5" r="1.300" fill="#fff"/><circle cx="4" cy="5" r="1.300" fill="#fff"/>',
    cross: '<path d="M0-6v12M-4-2h8" stroke="#fff" stroke-width="2"/>',
    wheel: '<circle r="4" fill="none" stroke="#fff" stroke-width="1.500"/><path d="M0-6v12M-6 0H6M-4-4l8 8M4-4l-8 8" stroke="#fff"/>',
    paw: '<circle cx="-4" cy="-1" r="1.500" fill="#fff"/><circle cx="-1.500" cy="-4" r="1.500" fill="#fff"/><circle cx="2" cy="-4" r="1.500" fill="#fff"/><circle cx="4.500" cy="-1" r="1.500" fill="#fff"/><ellipse cy="2.500" rx="3.500" ry="3" fill="#fff"/>',
    cam: '<rect x="-5" y="-3" width="10" height="7" fill="#fff"/><rect x="-2" y="-5" width="4" height="2" fill="#fff"/><circle r="2" cy=".5" fill="#0aa5b5"/>',
    tree: '<circle cy="-1" r="4.500" fill="none" stroke="#fff" stroke-width="1.800"/><path d="M0-1v7M-3 5h6" stroke="#fff" stroke-width="1.500"/>',
    temple: '<path d="M-5 5V0l2-3 1 3v-3l2-3 2 3v3l1-3 2 3v5z" fill="#fff"/>',
    bag: '<path d="M-4-1h8v6h-8zM-2-1c0-5 4-5 4 0" fill="#fff" stroke="#fff"/><circle cy="2" r="1.200" fill="#4a80f0"/>',
    cap: '<path d="m-6-1 6-3 6 3-6 3zM-3 1v3l3 1 3-1V1" fill="#fff"/>',
    golf: '<path d="M-2-6l4 3-4 3M0 0l3 5M-2 0v6" stroke="#fff" fill="none" stroke-width="1.500"/>',
    dot: '<circle r="3" fill="#fff"/>',
    gate: '<path d="M-4-5v10M4-5v10M-4-1h8M-4 2h8" stroke="#fff" stroke-width="1.800"/>'
  };
  const pin = (x, y, c, g) => `<g transform="translate(${x} ${y})"><path d="M0 19C-2 12-10 8-10-1a10 10 0 0 1 20 0C10 8 2 12 0 19z" fill="${c}"/>${G[g]}</g>`;
  const B = '#4a80f0', S = '#607d8b', T = '#12a4b4', N = '#34a853';
  const mark = (x, y, n) => `<path d="M${x - 17} ${y - 12}h34v24h-13l-4 6-4-6h-13z" fill="#dc4a3e" stroke="#f5a39b" stroke-width=".6"/><text x="${x}" y="${y + 5}" text-anchor="middle" class="num">${n}</text>`;
  const head = (x, y, r) => `<path d="M-6-4 6 0-6 4z" transform="translate(${x} ${y}) rotate(${r})" fill="#555"/>`;
  const yellow = `M1145 9 1141 50 1128 80 1137 120 1143 200 1165 240 1150 205 1050 270 1015 320 1003 365
    M1003 205 1045 270M1330 9 1327 60M1040 621 1160 545 1190 540 1215 545 1250 530 1300 490 1380 465 1440 433
    M1160 621 1164 568 1150 548M1320 384 1370 403 1440 384M1510 408 1573 412 1721 439 1810 436 1844 436 1897 450 1951 474 1998 494 2046 501 2096 490 2166 478 2221 447
    M1497 480 1550 520 1556 545 1600 565 1640 605 1640 621M2046 500 2057 530 2106 590 2146 610 2158 621
    M2032 500 1992 523 1938 525 1908 540 1878 570 1861 570 1828 552 1799 540 1784 570 1739 600 1714 621
    M1938 525 1940 492 1951 465 1957 472 1950 490M1904 92 1980 62 2040 32 2066 9M1600 50 1560 80M1782 9 1780 60M1640 9 1665 66M1800 9 1840 64M1001 585 1006 621
    M2485 230 2470 260M1740 66 1770 40M2033 500 2040 450M1575 66 1600 35`;
  return `<svg viewBox="1002 9 1483 612" preserveAspectRatio="xMinYMin slice" role="img" aria-label="Map of Hồ Chí Minh">
  <rect x="1001" y="9" width="1600" height="1400" fill="#b8e2c6"/>
  <path fill="#e3e5ea" d="M1001 70 1060 95 1110 70 1150 66 1180 40 1260 66 1330 40 1400 64 1500 20 1560 9H1880L1870 66 1904 70V150L1960 150 2010 185 2045 168 2095 182 2060 210 1960 238 1904 290 1560 300 1500 400 1480 440 1590 440 1620 450 1540 500 1480 560 1440 621H1001zM1960 10H2062L2050 45 2010 62 1975 50 1904 90 1925 30zM1990 380 2012 395 2040 420 2052 480 2056 520 2049 535 2036 510 2030 470 2000 450z"/>
  <path fill="#b8e2c6" d="M1001 9h140v50l-50 12-30-14-60 8zM1150 9h60l60 40-30 10-70-30zM1300 9h40l-15 14zM1130 290l30-5v80l-25-25 5-25zM1155 508l12-6 4 18-12 6zM1090 598l10-4-2 14zM1560 9h40l10 14-30 10zM1450 384h60l-10 24-30 4zM1300 430l14 0v30l-10-6zM1055 378h5v10h-5zM1600 384h304v60l-280-10zM1905 40l40 20 20 60-45 40z"/>
  <path fill="#f4dcc6" d="M1905 325 1935 312 1975 335 1970 365 1950 390 1935 397 1915 388 1904 360zM1923 555 1938 525 1988 525 2017 545 2037 575 2041 600 1997 621H1878L1898 585zM1840 26h20v15h-20zM1580 20h60l-10 40-40-10zM1365 540l25 20v25l-20 10z"/>
  <path d="${blocks}" fill="#f5ecd0"/>
  <path d="${creeks}" fill="none" stroke="#8fb6f3" stroke-width="1.200"/>
  <path d="${rural}" fill="none" stroke="#e6f3ea" stroke-width="1"/>
  <path d="${city}" fill="none" stroke="#f8f9fb" stroke-width="1.200"/>
  <g fill="none" stroke="#9cbcf7" stroke-linejoin="round" stroke-linecap="round">
   <path stroke-width="2" d="M1001 57 1060 56 1105 62 1150 45M1165 210c-8 30-20 20-30 40s-35 30-42 60-30 30-45 35-28 20-26 40M1150 384c-20 30 10 60 20 100s-20 60-20 90M1175 520c10 30 60 50 50 100M1272 536c-30 40-20 60-10 85M1270 538h80"/>
   <path stroke-width="4" d="M1100 621c20-40 40-45 70-50s70-10 95-32M1265 539h75l12-16"/>
   <path stroke-width="12" d="M1372 384c-8 20 8 30-14 50s-44 20-40 60 16 46 50 50 32-20 32-60 40-10 24 16-14 40 0 60"/>
   <path stroke-width="30" d="M1425 572c30-10 40-20 60-4M1430 640c30-60 60-90 100-120s70-35 100-70"/>
   <path stroke-width="24" d="M1600 478c-10 20-20 30-38 38M1828 384c-20 30-45 30-42 55s20 40 8 62-50 0-70-12-50-8-56 20"/>
   <path stroke-width="12" d="M1600 490c10-30 36-44 52-20s-20 50-6 90c10 40 22 64 40 58s32-30 20-56-40-40-60-46-30-20-46-14M1724 384c8 30 10 40-14 45s-20 30 8 40M1350 384c-4 20 4 40-4 50"/>
   <path stroke-width="14" d="M1660 9c10 30 30 60 60 50M1700 30l30 30"/>
   <path stroke-width="1.500" d="M1960 90c20-40 60-20 90-25s60 0 90 0 40 60 70 70M1904 135c30-10 10 30 40-10s60-20 40-60M1980 384c-20 20-60 60-70 80s-60 60-80 20-10-40-40-44M2020 384c40 10 70-10 80 10s50 80 40 120M1810 621c0-30 20-40 10-60"/>
  </g>
  <g fill="none" stroke="#f4f6f8" stroke-width="2.500" stroke-linejoin="round">
   <path d="M1010 115 1075 90 1145 68M1001 160 1060 200 1155 205M1050 9 1065 100M1035 175 1060 300 1075 315 1060 384M1001 345 1060 370 1120 400 1160 384M1080 384 1100 420 1180 430 1240 410 1300 440 1340 500M1001 440 1080 450 1180 470 1290 460M1180 384 1220 470 1290 560 1300 621M1110 440 1120 540 1090 621M1230 430 1200 500 1180 530M1001 500 1100 500 1200 520M1290 520 1285 621M1210 610 1350 600 1430 570M1240 570 1400 582M1140 230 1100 340 1120 384"/>
   <path d="M2010 9V60L2040 90 2080 140M2060 120 2105 87 2138 130 2147 160 2192 155 2221 130M2078 185 2147 158M2088 178 2096 185 2093 205 2060 210 2000 225 1904 250M1999 230 1998 280 1960 320M1960 320 2060 300 2100 260 2080 220M2100 190 2140 240 2160 260M2140 408 2190 410 2225 420M2450 9 2460 90M2200 9 2220 30M1790 540 1810 570 1830 621M1830 621 1880 600 1960 590 2040 575 2070 540M1940 530 1950 600 1960 621M2005 530 2010 580 2015 621M2060 621 2110 590M2320 480 2350 520 2485 530M2450 621 2460 600 2485 580M1904 210 1925 195M1700 384 1720 400M1530 621 1555 560 1600 540M1480 440 1520 470 1560 440M2225 500H2310"/>
  </g>
  <g fill="none" stroke-linejoin="round"><path d="${yellow}" stroke="#e0a436" stroke-width="5"/><path d="${yellow}" stroke="#fbe3ad" stroke-width="2.600"/></g>
  <path d="M1440 621c30-60 60-90 100-120s70-35 95-65M1610 490c8-30 30-36 40-20s-20 50-6 90M1180 10l70 60M1690 470c30-20 60 30 94 20" fill="none" stroke="#6b7583" stroke-dasharray="3 2"/>
  <g class="halo">
  ${caps(1109, 152, 'HIỆP THÀNH')}${caps(1075, 194, 'TÂN CHÁNH')}${caps(1075, 203, 'HIỆP')}${caps(1090, 218, 'TÂN THỚI HIỆP', 'start')}${caps(1075, 360, 'TÂY THẠNH')}
  ${caps(1141, 171, 'THỚI AN', 'start')}${caps(1274, 393, 'PHƯỜNG DAKAO', 'start')}${caps(1479, 391, 'AN PHÚ')}${caps(1490, 53, 'ĐÔNG HIỆP')}${caps(1487, 44, 'PHƯỜNG TÂN')}
  ${caps(1943, 209, 'TAM PHƯỚC')}${caps(1932, 122, 'PHƯỚC TÂN', 'end')}${caps(1994, 291, 'AN PHƯỚC')}${caps(1651, 401, 'LONG TRƯỜNG')}${caps(2123, 65, 'GIANG ĐIỀN')}
  ${caps(2132, 267, 'LONG ĐỨC')}${caps(2132, 364, 'LỘC AN')}${caps(2002, 461, 'TT. LONG THÀNH')}${caps(1024, 547, 'BÌNH TRỊ')}${caps(1024, 556, 'ĐÔNG B')}${caps(1279, 546, 'P')}
  ${caps(1194, 617, 'KHU SỐ 9')}${caps(1368, 618, 'TÂN PHÚ')}${caps(1514, 618, 'PHÚ HỮU')}${caps(1583, 429, 'PHÚ HỮU')}${caps(1523, 446, 'PHƯỜNG BÌNH')}${caps(1523, 455, 'TRƯNG ĐÔNG')}
  ${caps(1539, 483, 'CÁT LÁI')}${caps(1373, 519, 'TÂN THUẬN', 'start')}${caps(1388, 528, 'ĐÔNG', 'start')}${caps(1650, 562, 'ĐẠI PHƯỚC')}${caps(1960, 515, 'PHƯỚC THIỀN')}${caps(2132, 525, 'LONG AN')}
  ${caps(1952, 562, 'KHU CÔNG')}${caps(1952, 571, 'NGHIỆP NHƠN')}${caps(1952, 580, 'TRẠCH 1')}${caps(1892, 608, 'PHÚ HỘI')}${caps(1995, 614, 'TT. HIỆP PHƯỚC')}${caps(2387, 617, 'BÀU CAN')}
  ${poi(1092, 75, 'Đông Thạnh', 'b', 'end')}${poi(1064, 254, 'Chợ Hạnh Thông Tây', 'b')}${poi(1480, 14, '(Ngã tư Chiêu Liêu)', 'b')}${poi(1652, 15, 'cù lao Phố', 'k')}
  ${poi(1966, 36, 'Khu du lịch sinh', 't', 'end')}${poi(1966, 50, 'thái Vườn Xoài', 't', 'end')}${poi(1930, 90, 'Khu du lịch -', 't', 'end')}${poi(1947, 104, 'Vườn Tiên', 't', 'end')}
  ${poi(2129, 31, 'Khu du lịch sinh thái', 'g', 'middle')}${poi(2129, 45, 'Thác Giang Điền', 'g', 'middle')}
  ${poi(2041, 90, 'Trường Sĩ', 's', 'middle')}${poi(2041, 104, 'quan Lục quân', 's', 'middle')}${poi(2041, 118, '2 (Đại học', 's', 'middle')}${poi(2041, 132, 'Nguyễn Huệ)', 's', 'middle')}
  ${poi(1053, 413, 'An Hương', 'b', 'end')}${poi(1110, 412, 'Chùa Vĩnh Nghiêm', 's')}${poi(1318, 421, 'Thảo Cầm Viên Sài Gòn', 'g')}${poi(1178, 465, 'Chợ Bến Thành', 'b')}
  ${poi(1108, 477, 'Công viên Văn', 't', 'end')}${poi(1108, 491, 'hóa Đầm Sen', 't', 'end')}${poi(1222, 508, 'Chợ An Đông', 'b')}${poi(1098, 515, 'Chùa Bà Thiên Hậu -', 's', 'middle')}${poi(1101, 529, 'Tuệ Thành Hội Quán', 's', 'middle')}
  ${poi(1359, 597, 'Crescent Mall', 'b')}${poi(1494, 484, 'Khu Vui Chơi', 't', 'end')}${poi(1490, 498, 'Trượt Tuyết Snow...', 't', 'end')}
  ${poi(1660, 425, 'Cầu Long Thành', 's')}${poi(1647, 508, 'Jeongsan country club', 'g')}${poi(1690, 533, 'Chùa Long Hương', 's')}${poi(2170, 611, 'Trạm thu phí', 's')}
  ${poi(1290, 28, 'Thuận An', 'k')}
  <text x="1015" y="337" class="big">Hồ Chí Minh</text>
  <text class="diag" transform="translate(1554 509) rotate(-42)" text-anchor="middle">THÀNH PHỐ HỒ CHÍ MINH</text>
  <text class="diag" transform="translate(1576 538) rotate(-42)" text-anchor="middle">ĐỒNG NAI</text>
  <text class="street" transform="translate(1156 563) rotate(-33)" text-anchor="middle">Đ. Võ Văn Kiệt</text>
  </g>
  ${tag(1106, 16, 'HL6')}${tag(1199, 15, 'HL9')}${tag(1281, 57, 'DT745')}${tag(1109, 117, 'HL80B')}${tag(1094, 240, 'QL1A')}${tag(1628, 16, 'HL11')}${tag(1656, 48, 'DT16')}${tag(1763, 42, 'QL1A')}${tag(1823, 40, 'QL15')}
  ${tag(1958, 251, 'QL51')}${tag(2079, 406, 'DT769')}${tag(2027, 421, 'QL51')}${tag(2218, 419, 'DT769')}${tag(1015, 527, 'DT10')}${tag(1595, 563, 'DT769')}${tag(1645, 613, 'DT19')}${tag(2059, 528, 'QL51')}${tag(2002, 545, 'DT19')}${tag(2050, 561, 'DT25B')}${tag(1933, 597, 'HL13')}${tag(2106, 616, 'HL12')}
  ${tag(1481, 409, 'CT01', 'y')}${tag(1618, 418, 'CT01', 'y')}${tag(1930, 464, 'CT01', 'y')}${tag(2209, 455, 'CT01', 'y')}
  ${pin(1106, 70, B, 'cart')}${pin(1144, 69, S, 'cross')}${pin(1412, 57, B, 'bag')}${pin(1318, 70, '#e0524a', 'dot')}${pin(1729, 66, B, 'bag')}${pin(1979, 38, T, 'cam')}${pin(2041, 151, S, 'cap')}
  ${pin(1066, 408, B, 'cart')}${pin(1238, 407, S, 'wheel')}${pin(1305, 416, N, 'paw')}${pin(1285, 460, B, 'cart')}${pin(1122, 479, T, 'tree')}${pin(1210, 503, B, 'cart')}${pin(1178, 517, S, 'temple')}${pin(1345, 591, B, 'bag')}${pin(1472, 455, T, 'cam')}
  ${pin(1773, 420, S, 'gate')}${pin(1671, 527, N, 'golf')}${pin(1815, 527, S, 'temple')}${pin(2156, 606, S, 'dot')}
  <g fill="none" stroke="#69c200" stroke-width="6" stroke-linejoin="round" stroke-linecap="round">
   <path d="M1904 180 1926 187 1940 202 1949 222 1957 248 1959 271 1973 290 1984 311 1994 330 2004 368 2019 398 2036 442 2040 452 2042 485 2047 501 2032 499 1988 488 1951 474 1897 450 1874 441 1843 436 1809 436 1720 439 1660 426 1600 416 1573 412 1561 417 1559 432 1534 459 1507 488 1465 530 1451 545 1435 553 1389 576 1370 593 1353 591 1353 553 1358 542 1368 536 1376 540 1409 540 1414 543"/>
   <path d="M2040 449 2061 421 2078 407 2091 402 2103 401 2136 409M1446 384 1443 407 1437 433 1472 477 1498 479 1507 487"/>
  </g>
  ${head(1917, 184, 190)}${head(1984, 312, 240)}${head(2037, 449, 40)}${head(1952, 474, 250)}${head(1811, 436, 0)}${head(1661, 427, 240)}${head(1438, 440, 45)}${head(1507, 487, 130)}${head(1464, 531, 130)}${head(1389, 577, 100)}${head(1353, 571, -90)}${head(1412, 543, 50)}${head(2137, 444, 90)}
  <circle cx="2137" cy="416" r="11" fill="#f09025"/><circle cx="1415" cy="514" r="11" fill="#f09025"/>
  ${mark(1533, 443, 4)}${mark(1414, 522, 3)}${mark(2137, 424, 5)}
  </svg>`;
};
define('map-canvas', `:host{display:block;overflow:hidden;background:#b8e2c6}
  svg{width:100%;height:100%;display:block;font-family:Roboto,"Liberation Sans",sans-serif}
  .halo text{paint-order:stroke;stroke:#fff;stroke-opacity:.75;stroke-width:2.500px;stroke-linejoin:round}
  .caps{font-size:9px;font-weight:500;letter-spacing:1px;fill:#4d4d4d}
  .poi{font-size:14px}.b{fill:#2f6fe0}.t{fill:#0e8a9c}.g{fill:#158f43}.s{fill:#5d6f7e}.k{fill:#444}
  .big{font-size:25px;font-weight:500;fill:#1e1e1e}
  .diag{font-size:14px;font-weight:500;fill:#444}
  .street{font-size:11px;fill:#8a5a1a}
  .tag rect{fill:#2f6cb8}.tag text{fill:#fff;font-size:9px;font-weight:700}
  .tag.y rect{fill:#fbcb31;stroke:#b98b00;stroke-width:.6}.tag.y text{fill:#4a3c00}
  .num{fill:#fff;font-size:14px;font-weight:700}`, mapArt);

define('map-legend', `:host{display:flex;flex-wrap:wrap;align-items:center;gap:0 8px;height:28px;padding:0 12px 0 11px;border-radius:4px;background:rgba(255,255,255,.82);
    box-shadow:0 1px 4px rgba(0,0,0,.4);font-size:12px;font-weight:700;color:#757690}
  span{display:flex;align-items:center;gap:7px;white-space:nowrap}i{width:10px;height:10px;border-radius:50%}`,
  [['#2ea84a', 'Running'], ['#f00', 'Stopped'], ['#ff9c07', 'Stop ignition on'], ['#6d2b86', 'GPS weak'], ['#111', 'GPRS weak'], ['#9e9e9e', 'Historical transmission'], ['#4d1600', 'Service expired'], ['#c4c4c4', 'Not activated']]
    .map(([c, t]) => `<span><i style="background:${c}"></i>${t}</span>`).join(''));

define('device-info', `:host{display:block;width:258px;padding:0 4px 4px;border-radius:4px;background:rgba(255,255,255,.97);box-shadow:0 1px 4px rgba(0,0,0,.35);font-size:12px;font-weight:500;line-height:22px}
  header{display:flex;align-items:center;height:38px;padding:0 7px 3px 16px;font-size:13px;gap:20px}
  header b{flex:1;font-weight:500}header ui-icon{display:block;width:14px;height:14px}
  section{border:1px solid #ddd;border-radius:1px;margin-bottom:9px}section:last-child{margin:0}
  h3{height:31px;line-height:31px;padding-left:5px;border-bottom:1px solid #ddd;display:flex;align-items:center;gap:6px}
  h3 i{width:12px;height:12px;border-radius:50%;background:#1c1c1c}
  li{display:flex;align-items:center;gap:12px;padding-left:6px}
  li ui-icon{width:13px;height:13px;color:#888}
  ul.a{padding:3px 0 7px}
  .a li:nth-child(1){height:24px}.a li:nth-child(2),.a li:nth-child(3){height:22px}.a li:nth-child(4){height:18px}.a li:nth-child(5){height:32px}.a li:nth-child(6){height:16px}
  .a li:nth-child(1) ui-icon{width:17px;height:17px}
  .a li:nth-child(3) ui-icon{color:#bbb}
  .fb{height:21px;line-height:19px;border:1px solid #ffd591;background:#fff3e0;border-radius:2px;padding:0 7px;color:#f08a1c;font-size:13px;font-weight:500}
  ul.o{padding:4px 0;color:#999}.o li{height:22px}
  .d li{height:30px;color:#999;gap:0}.d span{width:119px}.d em{font-style:normal;color:#333}`,
  `<header><b>Device info</b><button aria-label="Settings"><ui-icon name="gear"></ui-icon></button><button aria-label="Collapse"><ui-icon name="right"></ui-icon></button></header>
  <section><h3><i></i>S400 (GoTrack)-68518</h3><ul class="a"><li><ui-icon name="gauge"></ui-icon></li><li><ui-icon name="route"></ui-icon>Distance: 97.26 km</li><li><ui-icon name="signal"></ui-icon></li>
  <li><ui-icon name="pin"></ui-icon></li><li><ui-icon name="chat"></ui-icon><button class="fb">Feedback address</button></li><li><ui-icon name="arrow"></ui-icon>,</li></ul></section>
  <section><h3>Other data</h3><ul class="o"><li>Defence:</li><li>Air:</li><li>Door:</li><li>Ignition:</li><li>Engine:</li><li>Seat belt:</li></ul></section>
  <section><h3>Driver</h3><ul class="d"><li><span>Driver name:</span><em>-</em></li></ul></section>`);

define('map-view', `:host{display:block;position:relative;min-height:0;overflow:hidden}
  map-canvas{position:absolute;inset:0}
  .tools{position:absolute;left:6px;top:11px;display:grid;gap:5px}
  .tools button{width:26px;height:26px;background:rgba(255,255,255,.97);box-shadow:0 1px 3px rgba(0,0,0,.5);display:grid;place-items:center;font-size:15px;border-radius:1px}
  .tools button:first-child{margin-bottom:9px}
  .tools ui-icon{width:15px;height:15px}
  map-legend{position:absolute;left:43px;top:10px}
  device-info{position:absolute;right:6px;top:11px}`,
  `<map-canvas></map-canvas><div class="tools"><button aria-label="Legend">i</button><button aria-label="Search map"><ui-icon name="search"></ui-icon></button><button aria-label="Measure"><ui-icon name="ruler"></ui-icon></button></div>
  <map-legend></map-legend><device-info></device-info>`);

/* ---------- data log ---------- */
const ROWS = [['00:00:01', 17, '00:00:02'], ['00:00:01', 18, '00:00:02'], ['00:00:33', 18, '00:00:32'], ['00:01:03', 18, '00:01:15'], ['00:01:34', 18, '00:01:40'], ['00:02:04', 16, '00:02:08']];
define('data-log', `:host{display:block;background:#fff}
  .tabs{display:flex;align-items:center;height:39px;padding:0 6px 0 20px;gap:32px;border-bottom:1px solid #c4c4c4}
  .tabs button{height:38px;line-height:36px;border-bottom:2px solid transparent}
  .tabs .on{color:#f7941d;border-color:#f7941d}
  .tabs .x{margin-left:auto;width:24px;height:24px;background:#f7941d;color:#fff;border:0;border-radius:2px;display:grid;place-items:center;line-height:0}
  .x ui-icon{width:12px;height:12px}
  .tb{padding:1px 4px 1px 1px;border-bottom:1px solid #c4c4c4}
  table{width:100%;border-collapse:collapse;table-layout:fixed}
  th{height:39px;font-weight:400;background:#f2f2f2;text-align:center}
  td{height:27px;padding:0 8px}
  th,td{border:1px solid #bfbfbf;white-space:nowrap;line-height:20px}
  th{padding:0}
  .pg{display:flex;align-items:center;height:40px;padding-left:4px;border-bottom:1px solid #c4c4c4}
  .xl{width:31px;height:32px;border:1px solid #d0d0d0;border-radius:2px;display:grid;place-items:center;color:#0a8f0a;margin-right:5px}
  .pg ui-icon{display:block}.xl ui-icon{width:13px;height:16px}
  .pg .p{width:24px;height:24px;line-height:22px;text-align:center;display:grid;place-items:center}
  .pg .p ui-icon{width:11px;height:11px}
  .tot{margin-right:9px}
  .pg .cur{border:1px solid #f7941d;border-radius:2px;font-weight:500;color:#222}
  .dis{color:#aaa}.dots{width:32px;text-align:center;color:#999;letter-spacing:1px;font-size:12px}
  .pg .last{width:38px}
  .sel{display:flex;position:relative;margin-left:8px;align-items:center}
  select{appearance:none;width:80px;height:24px;border:1px solid #d0d0d0;border-radius:2px;background:none;padding:0 7px}
  .sel ui-icon{position:absolute;right:11px;width:10px;height:10px;color:#aaa;pointer-events:none}
  .bot{display:flex;align-items:center;height:37px;padding:0 8px 0 11px;gap:22px}
  .bot ui-icon{display:block}.bot .sp{flex:1}`,
  `<div class="tabs"><button class="on">Data log</button><button>Speed</button><button>GPS/GSM</button><button>Battery/Power</button><button>Dầu</button><button class="x" aria-label="Close"><ui-icon name="close"></ui-icon></button></div>
  <div class="tb"><table><colgroup><col style="width:92px"><col style="width:196px"><col style="width:144px"><col><col style="width:66px"><col style="width:65px"><col style="width:131px"><col style="width:132px"><col style="width:195px"></colgroup>
  <thead><tr><th>#</th><th>Time device</th><th>Speed(km/h)</th><th>Address</th><th>GSM</th><th>GPS</th><th>Power(V)</th><th>Battery</th><th>Update time</th></tr></thead>
  <tbody>${ROWS.map((r, i) => `<tr><td>${i + 1}</td><td>2022/08/03 ${r[0]}</td><td>0</td><td>P. Trường Thọ, TP. Thủ Đức, TP. Hồ Chí Minh, Việt Nam</td><td>29</td><td>${r[1]}</td><td>24.6</td><td>No battery</td><td>2022/08/03 ${r[2]}</td></tr>`).join('')}</tbody></table></div>
  <div class="pg"><button class="xl" aria-label="Export Excel"><ui-icon name="sheet"></ui-icon></button><span class="tot">Total 1019</span><button class="p dis" aria-label="Previous"><ui-icon name="left"></ui-icon></button>
  <button class="p cur">1</button><button class="p">2</button><button class="p">3</button><button class="p">4</button><button class="p">5</button><span class="dots">•••</span><button class="p last">170</button><button class="p" aria-label="Next"><ui-icon name="right"></ui-icon></button>
  <span class="sel"><select aria-label="Page size"><option>6/page</option></select><ui-icon name="caret"></ui-icon></span></div>
  <div class="bot">${['gear', 'plus', 'minus', 'nav', 'full'].map(n => `<button aria-label="${n}"><ui-icon name="${n}"></ui-icon></button>`).join('')}<span class="sp"></span>${['locate', 'route', 'frame', 'poly', 'map'].map(n => `<button aria-label="${n}"><ui-icon name="${n}"></ui-icon></button>`).join('')}</div>`);

/* ---------- dialog ---------- */
define('setting-row', `:host{display:block;border-top:1px solid #eee}:host(:first-child){border-top:0}
  :host([head]){background:#fafafa;border-color:#d9d9d9}:host([second]){border-color:#d9d9d9}
  label{display:flex;align-items:center;height:34px;padding:0 16px;gap:12px}
  span{flex:1}ui-icon{width:12px;height:12px;margin-left:1px}
  input{appearance:none;width:28px;height:16px;border-radius:8px;background:#f7941d;position:relative}
  input:after{content:"";position:absolute;right:2px;top:2px;width:12px;height:12px;border-radius:50%;background:#fff;box-shadow:0 1px 3px rgba(0,0,0,.25)}`,
  el => `<label>${el.hasAttribute('head') ? '<ui-icon name="caret"></ui-icon>' : ''}<span><slot></slot></span><input type="checkbox" role="switch" checked></label>`);

define('settings-dialog', `:host{display:block;width:750px;background:#fff;border-radius:2px;color:#404040;box-shadow:0 4px 12px rgba(0,0,0,.2)}
  header{display:flex;align-items:center;height:38px;padding:0 13px 2px 24px}
  h2{flex:1;font-size:16px;line-height:24px}header ui-icon{display:block;width:14px;height:14px}
  .body{position:relative;display:flex;gap:24px;padding:25px 24px;height:233px}
  .body>note-box{inset:0 -3px 0 0}
  .body>note-num{left:356px;top:-42px}
  nav{width:119px;height:184px;border-right:1px solid #eee;display:flex;flex-direction:column;gap:8px}
  nav a{height:38px;line-height:38px;padding-left:8px;margin-right:-1px}
  nav .on{color:#f7941d;font-weight:500;border-right:2px solid #f7941d}
  .card{flex:1;border:1px solid #d9d9d9;border-radius:2px;align-self:flex-start}
  footer{display:flex;justify-content:flex-end;gap:8px;padding:9px 24px 8px}
  footer button{height:32px;padding:0 15px;border:1px solid #d9d9d9;border-radius:2px;line-height:30px}
  .save{position:relative;background:#f7941d;border-color:#f7941d;color:#fff;font-weight:500}
  .save note-box{inset:-3px -3px 0 -4px}.save note-num{left:-45px;top:-6px}`,
  `<header><h2>Display info setting</h2><button aria-label="Close"><ui-icon name="close"></ui-icon></button></header>
  <div class="body"><nav><a href="#list">List device</a><a href="#box">Device info box</a><a href="#track">Tracking</a><a href="#history" class="on">History trips</a></nav>
  <div class="card"><setting-row head>Summary</setting-row><setting-row second>Driving</setting-row><setting-row>Stop</setting-row><setting-row>Distance</setting-row></div>
  <note-box></note-box><note-num>3</note-num></div>
  <footer><button class="save">Save<note-box></note-box><note-num>4</note-num></button><button>Close</button></footer>`);

/* ---------- page ---------- */
define('track-app', `:host{display:grid;grid-template-columns:60px 373px minmax(0,1fr);grid-template-rows:minmax(0,1fr);position:relative;height:100%}
  .main{display:grid;grid-template-rows:minmax(0,1fr) auto;min-width:0;min-height:0}
  .mask{position:absolute;inset:0;background:rgba(0,0,0,.45);z-index:2}
  .dlg{position:absolute;left:4px;right:0;top:55px;display:flex;justify-content:center;z-index:4}`,
  `<app-rail></app-rail><trips-panel></trips-panel><div class="main"><map-view></map-view><data-log></data-log></div><div class="mask"></div><div class="dlg"><settings-dialog></settings-dialog></div>`);

define('guide-page', `:host{display:grid;grid-template-columns:429px 135px minmax(0,1fr);grid-template-rows:minmax(0,1fr);padding:5px 6px 5px 1px;height:100vh;min-height:900px;box-sizing:border-box}
  .left{display:grid;grid-template-columns:60px minmax(0,1fr);grid-template-rows:minmax(0,1fr);margin:3px 0;min-height:0}
  .right{border:3px solid #ff4444;padding:1px 0 1px 1px;min-height:0;min-width:0}
  .left device-panel{min-height:0}`,
  `<div class="left"><app-rail></app-rail><device-panel></device-panel></div><flow-arrow></flow-arrow><div class="right"><track-app></track-app></div>`);
</script>
</body>
</html>
